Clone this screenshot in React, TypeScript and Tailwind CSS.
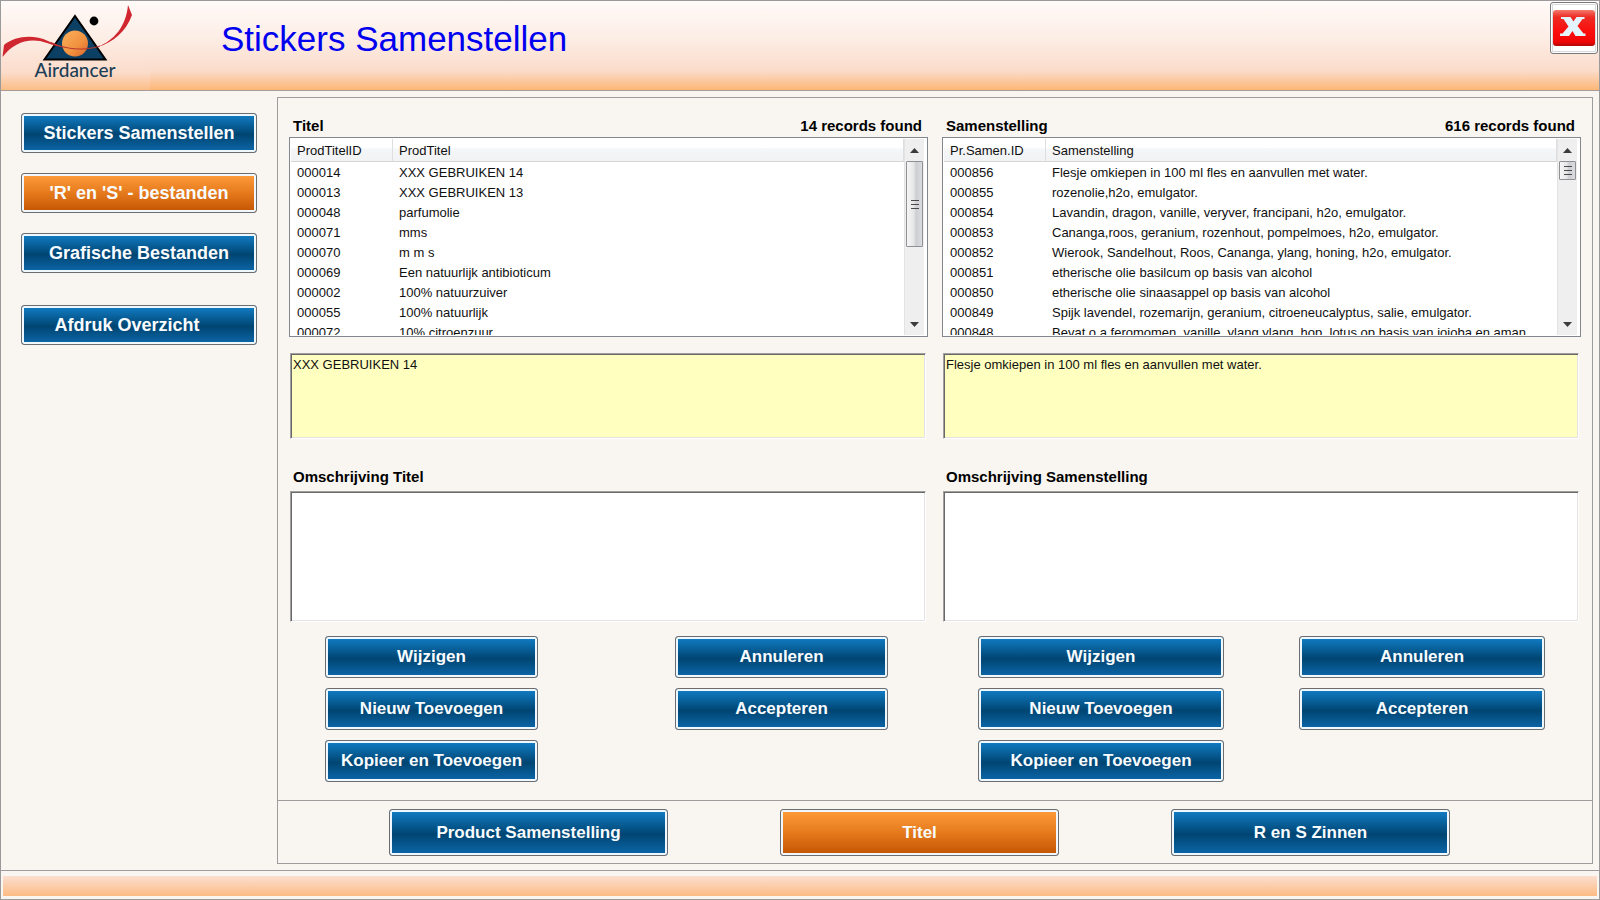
import type { ReactNode } from "react";
import clsx from "clsx";

type Row = [string, string];

const titles: Row[] = [
  ["000014", "XXX GEBRUIKEN 14"],
  ["000013", "XXX GEBRUIKEN 13"],
  ["000048", "parfumolie"],
  ["000071", "mms"],
  ["000070", "m m s"],
  ["000069", "Een natuurlijk antibioticum"],
  ["000002", "100% natuurzuiver"],
  ["000055", "100% natuurlijk"],
  ["000072", "10% citroenzuur"],
];

const compositions: Row[] = [
  ["000856", "Flesje omkiepen in 100 ml fles en aanvullen met water."],
  ["000855", "rozenolie,h2o, emulgator."],
  ["000854", "Lavandin, dragon, vanille, veryver, francipani, h2o, emulgator."],
  ["000853", "Cananga,roos, geranium, rozenhout, pompelmoes, h2o, emulgator."],
  ["000852", "Wierook, Sandelhout, Roos, Cananga, ylang, honing, h2o, emulgator."],
  ["000851", "etherische olie basilcum op basis van alcohol"],
  ["000850", "etherische olie sinaasappel op basis van alcohol"],
  ["000849", "Spijk lavendel, rozemarijn, geranium, citroeneucalyptus, salie, emulgator."],
  ["000848", "Bevat o.a feromomen, vanille, ylang ylang, hop, lotus op basis van jojoba en aman"],
];

function Action({
  children,
  tone = "blue",
  className,
}: {
  children: ReactNode;
  tone?: "blue" | "orange";
  className?: string;
}) {
  return (
    <button
      type="button"
      className={clsx(
        "flex shrink-0 items-center justify-center whitespace-nowrap rounded-[3px] border border-[#6c6d70] leading-5 font-bold text-[#f8fcff] shadow-[inset_0_0_0_2px_#eef8fe]",
        tone === "blue"
          ? "bg-[linear-gradient(#117bc2_4%,#004572_54%,#0c65a6_96%)]"
          : "bg-[linear-gradient(#fd9a3a_4%,#e57a1c_50%,#c65704_96%)]",
        className,
      )}
    >
      {children}
    </button>
  );
}

function Logo() {
  return (
    <svg viewBox="0 0 149 89" className="h-[89px] w-[149px]" role="img" aria-label="Airdancer">
      <defs>
        <linearGradient id="sun" x1="0" y1="0" x2="1" y2="1">
          <stop offset="0" stopColor="#fdb05c" />
          <stop offset="0.6" stopColor="#f0913f" />
          <stop offset="1" stopColor="#d9622c" />
        </linearGradient>
      </defs>
      <path d="M74 15 L104.500 58.500 H43.500 Z" fill="#0b3f63" stroke="#000" strokeWidth="2" />
      <circle cx="74" cy="42.500" r="13" fill="url(#sun)" />
      <circle cx="93" cy="20" r="4.400" fill="#000" />
      <path
        d="M1.500 56 L3 44 C14 35 32 33 47 40 C54 43 60 45.500 66 47 C58 46 52 44 46 42 C29 36 13 41 1.500 56 Z"
        fill="#cf2630"
      />
      <path
        d="M97 46 C113 39 125 26 127 4 L131 14 C125 31 112 41 97 46 Z"
        fill="#cf2630"
      />
      <path d="M50 41.500 C66 49 84 50 99 45" fill="none" stroke="#b8352f" strokeWidth="1" />
      <text
        x="74"
        y="76"
        textAnchor="middle"
        fill="#1b3f57"
        fontFamily="Lato, sans-serif"
        fontSize="19"
        fontWeight="500"
      >
        Airdancer
      </text>
    </svg>
  );
}

function ScrollBar({ thumb }: { thumb: string }) {
  return (
    <div className="flex w-5 shrink-0 flex-col border-l border-[#e3e3e3] bg-[#efefef] px-px">
      <button type="button" aria-label="Omhoog" className="flex h-[22px] shrink-0 items-center justify-center">
        <svg viewBox="0 0 9 5" className="h-[5px] w-[9px]">
          <path d="M0 5 L4.500 0 L9 5 Z" fill="#3c3c3c" />
        </svg>
      </button>
      <div
        className={clsx(
          "flex shrink-0 flex-col items-center justify-center gap-[3px] rounded-[1px] border border-[#8f9093] bg-[linear-gradient(90deg,#f6f6f6,#e6e6e8_45%,#cdced2_60%,#dcdce0)]",
          thumb,
        )}
      >
        <span className="h-px w-2 bg-[#4a4a4a]" />
        <span className="h-px w-2 bg-[#4a4a4a]" />
        <span className="h-px w-2 bg-[#4a4a4a]" />
      </div>
      <button
        type="button"
        aria-label="Omlaag"
        className="mt-auto flex h-[22px] shrink-0 items-center justify-center"
      >
        <svg viewBox="0 0 9 5" className="h-[5px] w-[9px]">
          <path d="M0 0 L4.500 5 L9 0 Z" fill="#3c3c3c" />
        </svg>
      </button>
    </div>
  );
}

const headCell = "border-r border-b border-r-[#dedfe1] border-b-[#d5d5d5] pt-0.5 pl-1.5 font-normal";

function RecordList({ head, rows, thumb }: { head: Row; rows: Row[]; thumb: string }) {
  return (
    <div className="flex h-[200px] border border-[#828790] bg-white p-px pr-[3px]">
      <div className="min-w-0 flex-1 overflow-hidden">
        <table className="w-full table-fixed border-separate border-spacing-0 text-left text-[13px] leading-5 text-[#101010]">
          <thead>
            <tr className="bg-[linear-gradient(#ffffff_40%,#f5f6f8_42%,#f1f2f4)]">
              <th className={clsx(headCell, "w-[102px]")}>{head[0]}</th>
              <th className={headCell}>{head[1]}</th>
            </tr>
          </thead>
          <tbody className="before:block before:h-px before:content-['']">
            {rows.map(([id, text]) => (
              <tr key={id} className="h-5">
                <td className="pl-1.5">{id}</td>
                <td className="overflow-hidden whitespace-nowrap pl-1.5">{text}</td>
              </tr>
            ))}
          </tbody>
        </table>
      </div>
      <ScrollBar thumb={thumb} />
    </div>
  );
}

const sunken =
  "block w-full resize-none border border-t-[#a0a0a0] border-l-[#a0a0a0] border-r-white border-b-white shadow-[inset_1px_1px_#696969,inset_-1px_-1px_#e3e3e3] outline-none text-[13px] leading-4 text-[#101010] px-0.5 py-[3px]";

function Section({
  id,
  title,
  count,
  head,
  rows,
  thumb,
  selected,
  editLabel,
  buttonWidth,
  buttonInset,
}: {
  id: string;
  title: string;
  count: string;
  head: Row;
  rows: Row[];
  thumb: string;
  selected: string;
  editLabel: string;
  buttonWidth: string;
  buttonInset: string;
}) {
  const button = clsx("h-[42px] text-[17px]", buttonWidth);
  return (
    <section className="min-w-0">
      <div className="flex justify-between pr-1.5 pl-1 text-[15px] leading-5 font-bold text-black">
        <h2>{title}</h2>
        <p>{count}</p>
      </div>
      <div className="mt-px">
        <RecordList head={head} rows={rows} thumb={thumb} />
      </div>
      <div className="mt-4 pr-0.5 pl-px">
        <textarea
          readOnly
          aria-label={title}
          defaultValue={selected}
          className={clsx(sunken, "h-[86px] bg-[#ffffc0]")}
        />
        <label htmlFor={id} className="mt-7 block px-[3px] text-[15px] leading-5 font-bold text-black">
          {editLabel}
        </label>
        <textarea id={id} className={clsx(sunken, "mt-1 h-[131px] bg-white")} />
      </div>
      <div className={clsx("mt-3.5 flex justify-between pl-9", buttonInset)}>
        <div className="flex flex-col gap-2.5">
          <Action className={button}>Wijzigen</Action>
          <Action className={button}>Nieuw Toevoegen</Action>
          <Action className={button}>Kopieer en Toevoegen</Action>
        </div>
        <div className="flex flex-col gap-2.5">
          <Action className={button}>Annuleren</Action>
          <Action className={button}>Accepteren</Action>
        </div>
      </div>
    </section>
  );
}

export default function App() {
  return (
    <div className="flex min-h-screen flex-col border border-[#9a9a9a] bg-[#f9f6f1] font-['Liberation_Sans',Arial,sans-serif]">
      <header className="flex h-[90px] items-start border-b border-[#a89c94] bg-[linear-gradient(#fffaf8,#fdeee6_40%,#fbdccb_78%,#fcb677)]">
        <div className="bg-[linear-gradient(#fffaf8,#fdeee6_40%,#fbdccb_80%,#fcbd86)]">
          <Logo />
        </div>
        <h1 className="mt-4 ml-[71px] text-[35px] leading-[44px] text-[#0000f0]">Stickers Samenstellen</h1>
        <button
          type="button"
          aria-label="Sluiten"
          className="mt-px mr-px ml-auto flex h-[52px] w-12 items-center justify-center rounded-[3px] border border-[#77787a] bg-white shadow-[inset_0_0_0_1px_#ffffff,inset_0_0_0_2px_#d9dadb]"
        >
          <svg viewBox="0 0 42 36" className="h-9 w-[42px]">
            <defs>
              <linearGradient id="close" x1="0" y1="0" x2="0" y2="1">
                <stop offset="0" stopColor="#f4796c" />
                <stop offset="0.2" stopColor="#ee2a22" />
                <stop offset="0.6" stopColor="#fb0d0d" />
                <stop offset="0.88" stopColor="#f00505" />
                <stop offset="1" stopColor="#b40808" />
              </linearGradient>
            </defs>
            <rect width="42" height="36" rx="3" fill="url(#close)" />
            <path
              d="M8 7 H17.500 L20.500 11.500 L23.500 7 H31.500 V9 H29.500 L24.500 16 L30.500 23.500 H32.500 V26 H22.500 L19.500 21 L16 26 H7 V23.500 H9.500 L15.500 16.500 L10.500 9 H8 Z"
              fill="#e4f4fc"
            />
          </svg>
        </button>
      </header>

      <div className="flex flex-1 pt-1.5 pr-1.5 pb-1.5">
        <nav className="flex w-[276px] shrink-0 flex-col pt-4 pr-5 pl-5 text-lg">
          <Action className="h-10">Stickers Samenstellen</Action>
          <Action tone="orange" className="mt-5 h-10">
            'R' en 'S' - bestanden
          </Action>
          <Action className="mt-5 h-10">Grafische Bestanden</Action>
          <Action className="mt-8 h-10 pr-6">Afdruk Overzicht</Action>
        </nav>

        <main className="flex min-w-0 flex-1 flex-col border border-[#9d9d9d]">
          <div className="grid flex-1 grid-cols-2 gap-3.5 px-[11px] pt-[18px]">
            <Section
              id="omschrijving-titel"
              title="Titel"
              count="14 records found"
              head={["ProdTitelID", "ProdTitel"]}
              rows={titles}
              thumb="h-[86px]"
              selected="XXX GEBRUIKEN 14"
              editLabel="Omschrijving Titel"
              buttonWidth="w-[213px]"
              buttonInset="pr-10"
            />
            <Section
              id="omschrijving-samenstelling"
              title="Samenstelling"
              count="616 records found"
              head={["Pr.Samen.ID", "Samenstelling"]}
              rows={compositions}
              thumb="h-[19px]"
              selected="Flesje omkiepen in 100 ml fles en aanvullen met water."
              editLabel="Omschrijving Samenstelling"
              buttonWidth="w-[246px]"
              buttonInset="pr-9"
            />
          </div>
          <div className="flex justify-between border-t border-[#9d9d9d] pt-2 pr-[142px] pb-[7px] pl-[111px] text-[17px]">
            <Action className="h-[47px] w-[279px]">Product Samenstelling</Action>
            <Action tone="orange" className="h-[47px] w-[279px]">
              Titel
            </Action>
            <Action className="h-[47px] w-[279px]">R en S Zinnen</Action>
          </div>
        </main>
      </div>

      <footer className="border-t border-[#9d9d9d] px-0.5 pt-[5px] pb-[3px]">
        <div className="h-[20px] bg-[linear-gradient(#fbdfd0,#fcbb84)]" />
      </footer>
    </div>
  );
}
